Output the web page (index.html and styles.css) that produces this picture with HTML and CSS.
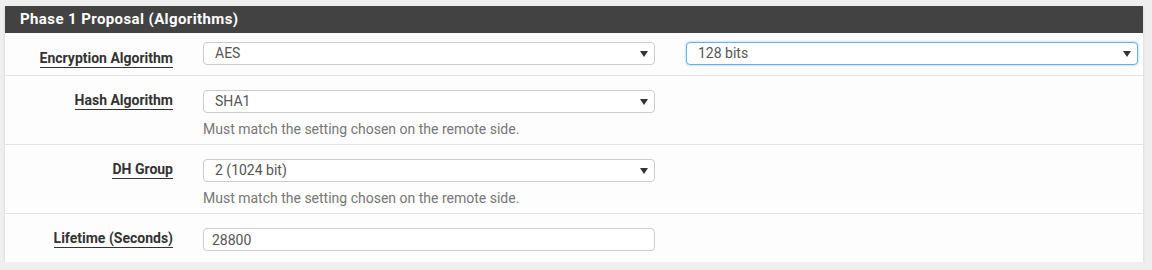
FILE: index.html
```html
<!DOCTYPE html>
<html lang="en">
<head>
  <meta charset="UTF-8" />
  <title>Phase 1 Proposal</title>
  <link rel="stylesheet" href="styles.css">
</head>
<body>

  <div class="panel">
    <div class="panel-heading">Phase 1 Proposal (Algorithms)</div>

    <div class="form-row first">
      <label class="form-label"><span>Encryption Algorithm</span></label>
      <div class="field">
        <div class="select-wrap">
          <select class="form-control">
            <option>AES</option>
          </select>
        </div>
      </div>
      <div class="field">
        <div class="select-wrap">
          <select class="form-control focused">
            <option>128 bits</option>
          </select>
        </div>
      </div>
    </div>

    <div class="form-row with-help">
      <label class="form-label"><span>Hash Algorithm</span></label>
      <div class="field">
        <div class="select-wrap">
          <select class="form-control">
            <option>SHA1</option>
          </select>
        </div>
        <div class="help">Must match the setting chosen on the remote side.</div>
      </div>
    </div>

    <div class="form-row with-help">
      <label class="form-label"><span>DH Group</span></label>
      <div class="field">
        <div class="select-wrap">
          <select class="form-control">
            <option>2 (1024 bit)</option>
          </select>
        </div>
        <div class="help">Must match the setting chosen on the remote side.</div>
      </div>
    </div>

    <div class="form-row">
      <label class="form-label"><span>Lifetime (Seconds)</span></label>
      <div class="field">
        <input class="form-control" type="text" value="28800">
      </div>
    </div>
  </div>

</body>
</html>
```

FILE: styles.css
```css
* {
  box-sizing: border-box;
  margin: 0;
  padding: 0;
}

body {
  background: #efefef;
  font-family: Roboto, "Liberation Sans", sans-serif;
  font-size: 14px;
  color: #333;
  padding: 6px 9px 0 5px;
}

.panel {
  background: #fdfdfd;
  box-shadow: 0 2px 3px rgba(0,0,0,0.12);
}

.panel-heading {
  background: #424242;
  color: #fff;
  font-weight: bold;
  font-size: 15px;
  letter-spacing: 0.4px;
  height: 27px;
  line-height: 27px;
  padding-left: 15px;
}

.form-row {
  display: flex;
  align-items: flex-start;
  padding: 14px 0 11px;
  border-top: 1px solid #e2e2e2;
}

.form-row.first {
  border-top: none;
  padding: 9px 0 10px;
}

.form-row.with-help {
  padding-bottom: 5px;
}

.form-label {
  width: 168px;
  text-align: right;
  font-weight: bold;
  line-height: 16px;
  margin: 2px 0 -2px;
}

.form-row.first .form-label {
  margin: 8px 0 -8px;
}

.form-label span {
  border-bottom: 1px solid #333;
  padding-bottom: 1px;
}

.field {
  width: 452px;
  margin-left: 30px;
}

.field + .field {
  margin-left: 31px;
}

.select-wrap {
  position: relative;
}

.select-wrap::after {
  content: "";
  position: absolute;
  right: 7px;
  top: 9px;
  border-left: 4px solid transparent;
  border-right: 4px solid transparent;
  border-top: 6px solid #333;
  pointer-events: none;
}

.form-control {
  display: block;
  width: 100%;
  height: 23px;
  padding: 0 11px 2px;
  font-family: Roboto, "Liberation Sans", sans-serif;
  font-size: 14px;
  color: #555;
  background: #fff;
  border: 1px solid #ccc;
  border-radius: 4px;
  appearance: none;
  -webkit-appearance: none;
  outline: none;
}

input.form-control {
  padding: 0 8px;
}

.form-control.focused {
  border-color: #66afe9;
  box-shadow: 0 0 3px rgba(102,175,233,0.6);
}

.help {
  color: #777;
  margin-top: 6px;
  line-height: 20px;
}
```
